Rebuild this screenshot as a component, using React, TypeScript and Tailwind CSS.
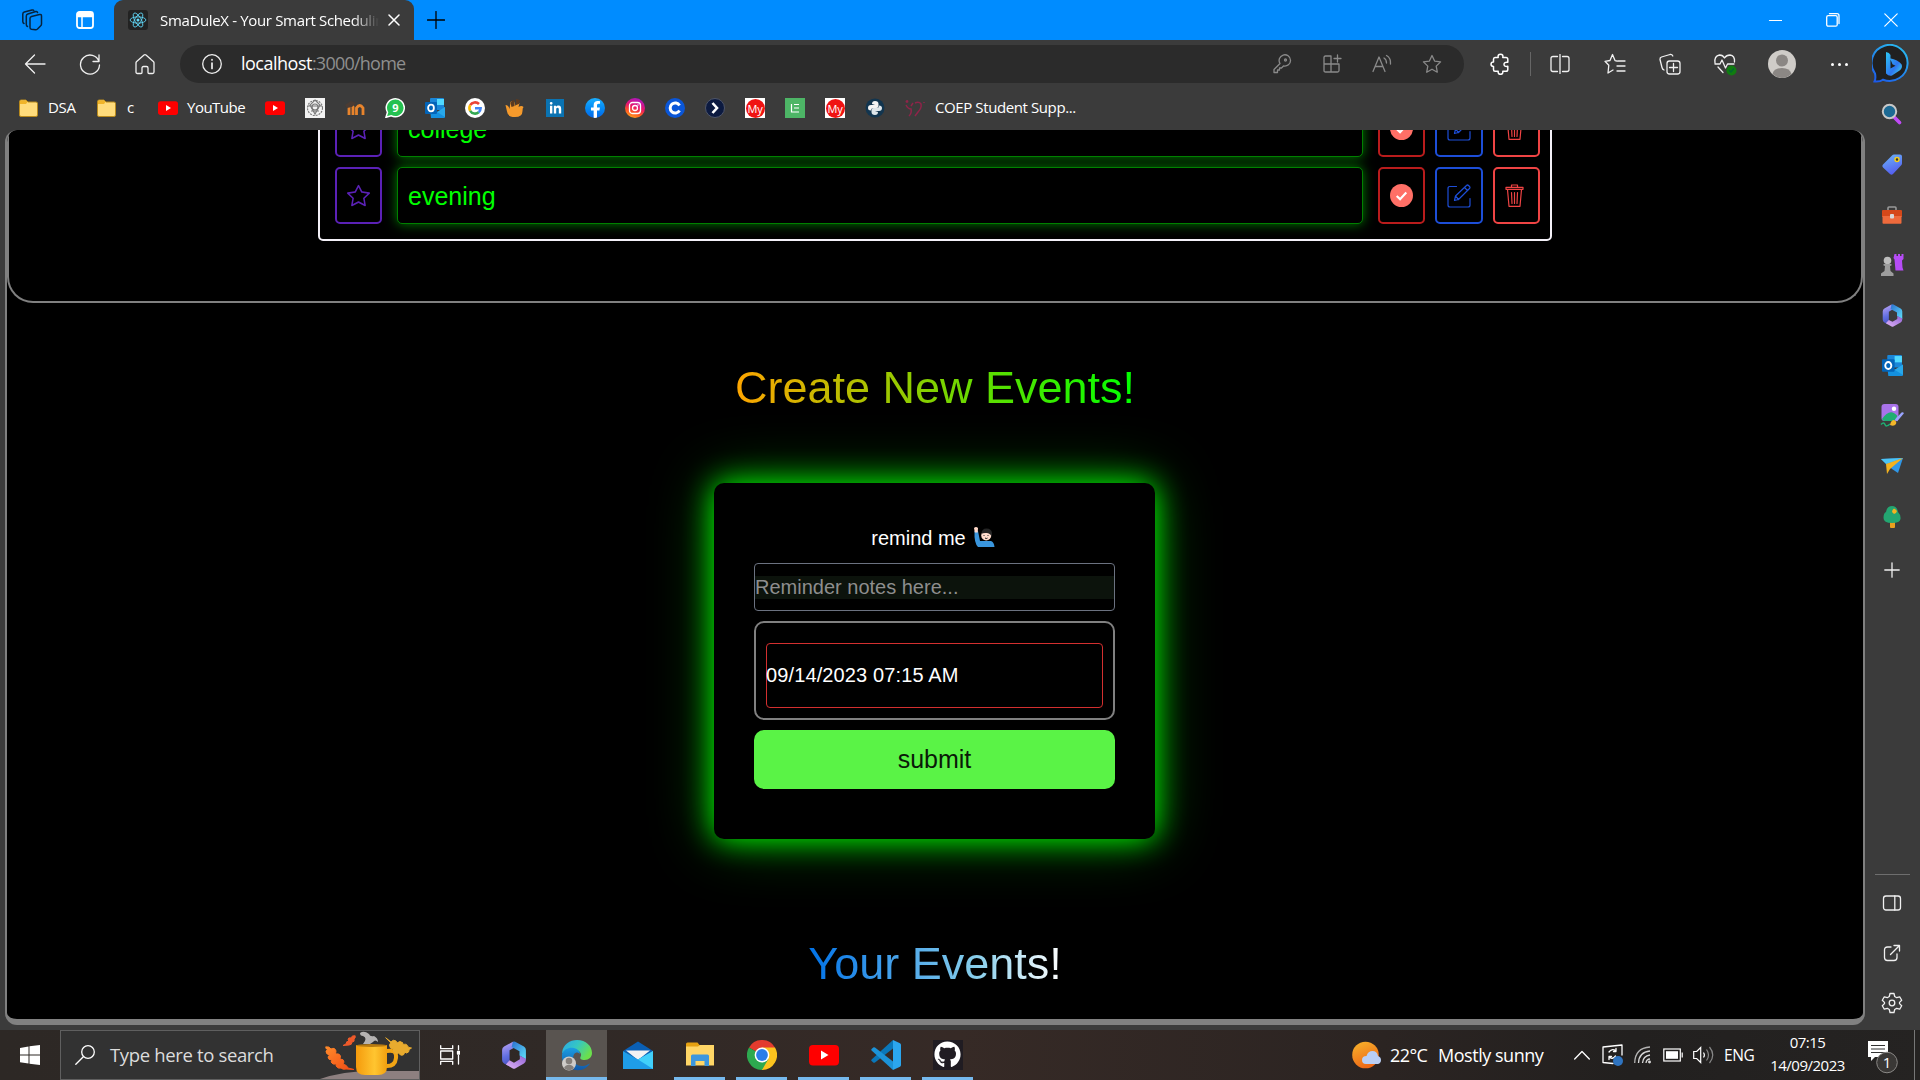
import React from "react";
import { BsStar } from "react-icons/bs";
import { FaLinkedinIn, FaFacebookF, FaGithub } from "react-icons/fa";

type SvgProps = { s?: number; h?: number; c?: string; vb?: string; children?: React.ReactNode };

const Svg = ({ s = 20, h, c = "", vb = "0 0 20 20", children }: SvgProps) => (
  <svg width={s} height={h ?? s} viewBox={vb} fill="none" stroke="currentColor" strokeWidth="1.3" strokeLinecap="round" strokeLinejoin="round" className={"block shrink-0 " + c}>
    {children}
  </svg>
);

const STAR = "M10 1.5l2.6 5.6 6 .8-4.4 4.2 1.1 6.1L10 15.200l-5.300 3 1.100-6.100L1.400 7.900l6-.8z";

/* ---------- brand icons ---------- */

const M365 = ({ s = 24, id }: { s?: number; id: string }) => (
  <svg width={s} height={s} viewBox="0 0 24 24" className="block shrink-0">
    <defs>
      <linearGradient id={id + "a"} x1=".3" y1="0" x2=".5" y2="1"><stop offset="0" stopColor="#b9a2f5" /><stop offset=".6" stopColor="#5f6ee0" /><stop offset="1" stopColor="#4a50c0" /></linearGradient>
      <linearGradient id={id + "b"} x1="0" y1="0" x2="1" y2="1"><stop offset="0" stopColor="#2b6fcf" /><stop offset="1" stopColor="#5fe0fa" /></linearGradient>
      <linearGradient id={id + "c"} x1="0" y1="1" x2="1" y2="0"><stop offset="0" stopColor="#e0b4f6" /><stop offset="1" stopColor="#9162d6" /></linearGradient>
    </defs>
    <path d="M11 .6L3.500 4.800Q1.800 5.800 1.800 7.800v8.400q0 2 1.700 3L7 21.200l4-2.300-2.800-1.700V8l4.300-2.500z" fill={`url(#${id}a)`} />
    <path d="M11 .6q1-.5 2 0l7.500 4.200q1.700 1 1.700 3v7.900l-5.500-3.200V8.800L10 5.200z" fill={`url(#${id}b)`} />
    <path d="M5 20.200l6 3.300q1 .5 2 0l7.500-4.300q1.700-1 1.700-3v-1L17 12.600v3l-5 3-3.800-2z" fill={`url(#${id}c)`} />
  </svg>
);

const Outlook = ({ s = 20 }: { s?: number }) => (
  <svg width={s} height={s} viewBox="0 0 20 20" className="block shrink-0">
    <rect x="5" y="0" width="14" height="12" rx="1" fill="#1a86d8" />
    <rect x="12" y="1" width="7" height="6" fill="#50d9ff" />
    <path d="M5 10l8 4 7-5v10q0 1-1 1H6z" fill="#1490df" />
    <path d="M20 9v10l-8-5z" fill="#28a8ea" />
    <rect x="0" y="4" width="12" height="12" rx="1" fill="#0364b8" />
    <ellipse cx="6" cy="10" rx="2.900" ry="3.300" fill="none" stroke="#fff" strokeWidth="1.800" />
  </svg>
);

const YouTube = ({ s = 20 }: { s?: number }) => (
  <svg width={s} height={s} viewBox="0 0 30 30" className="block shrink-0">
    <rect x="0" y="5" width="30" height="20.500" rx="4" fill="#f00" />
    <path d="M12 10.500l7.500 4.500-7.500 4.500z" fill="#fff" />
  </svg>
);

const Folder = () => (
  <svg width="20" height="20" viewBox="0 0 20 20" className="block shrink-0">
    <path d="M1.500 4q0-2 1.500-2h5l2 2h8q1.500 0 1.500 1.500v11.500q0 1.500-1.500 1.500H3q-1.500 0-1.500-1.500z" fill="#ffdc7c" stroke="#b98a1c" strokeWidth="1" />
    <path d="M2 3.500q0-1 1-1h5l1.500 1.500L8 6H2z" fill="#f0b429" />
  </svg>
);

const Google = () => (
  <svg width="20" height="20" viewBox="0 0 20 20" className="block shrink-0" fill="none" strokeWidth="2.600">
    <circle cx="10" cy="10" r="10" fill="#fff" />
    <path d="M14 6A5.600 5.600 0 0 0 5.200 7.200" stroke="#ea4335" />
    <path d="M5.200 7.200a5.600 5.600 0 0 0 0 5.600" stroke="#fbbc05" />
    <path d="M5.200 12.800A5.600 5.600 0 0 0 13.700 14.200" stroke="#34a853" />
    <path d="M13.700 14.200A5.600 5.600 0 0 0 15.600 10.200H10" stroke="#4285f4" />
  </svg>
);

const Chrome = () => (
  <svg width="30" height="30" viewBox="0 0 30 30" className="block shrink-0">
    <path d="M15 15L2 7.500A15 15 0 0 1 28 7.500z" fill="#e33b2e" />
    <path d="M15 15V7.500h13A15 15 0 0 1 15 30z" fill="#fcc31e" />
    <path d="M15 15l6.500 3.700L15 30A15 15 0 0 1 2 7.500z" fill="#2da94f" />
    <circle cx="15" cy="15" r="7.400" fill="#fff" />
    <circle cx="15" cy="15" r="5.900" fill="#2b7de9" />
  </svg>
);

const EdgeIcon = () => (
  <svg width="32" height="32" viewBox="0 0 32 32" className="block shrink-0">
    <defs>
      <linearGradient id="eg" x1="0" y1="0" x2="1" y2=".5"><stop offset="0" stopColor="#2aa6e8" /><stop offset=".5" stopColor="#35c6c4" /><stop offset="1" stopColor="#6be04c" /></linearGradient>
      <linearGradient id="eb" x1="0" y1="0" x2="0" y2="1"><stop offset="0" stopColor="#1b9de2" /><stop offset="1" stopColor="#1258a8" /></linearGradient>
    </defs>
    <path d="M1 14C2 5 9 1 16 1c9 0 15 6 15 13 0 4-3 7-7.500 7-3 0-5-1-4-3 2-3-1-7-5-7-6 0-11 3-13.500 3z" fill="url(#eg)" />
    <path d="M1 15c2-5 7-7 12-6 4 .8 6 4 6 6-1-1-2-1.500-3.500-1.500C12 14 11 20 14 24c3 4 9 4 15 .5-3 5-9 7.500-14 6.500C5 30 0 23 1 15z" fill="url(#eb)" />
    <circle cx="8" cy="24.500" r="7" fill="#cfccc9" />
    <circle cx="8" cy="22" r="3.300" fill="#85807c" />
    <path d="M3 29.300q1-3.500 5-3.500t5 3.500Q8 33.500 3 29.300z" fill="#85807c" />
  </svg>
);

const Mail = () => (
  <svg width="30" height="30" viewBox="0 0 30 30" className="block shrink-0">
    <path d="M0 11L15 1.500 30 11l-15 9z" fill="#0a5fb4" />
    <path d="M3 10.500h24L15 20z" fill="#f3f3f3" />
    <path d="M0 11l15 8.500L30 11v18H0z" fill="#1f9de8" />
    <path d="M15 19.500L30 11v18z" fill="#41d0fa" />
  </svg>
);

const Explorer = () => (
  <svg width="28" height="26" viewBox="0 0 28 26" className="block shrink-0">
    <path d="M0 2q0-1.500 1.500-1.500h10L13.500 3H28v8H0z" fill="#e5a111" />
    <path d="M0 4.500h12l2-1.500h14v20.500H0z" fill="#ffd666" />
    <path d="M5 24V14q0-1.500 1.500-1.500h15Q23 12.500 23 14v10h-4.500v-5h-9v5z" fill="#3d97dd" />
  </svg>
);

const VSCode = () => (
  <svg width="30" height="30" viewBox="0 0 30 30" className="block shrink-0">
    <path d="M22 0v8.500L4 22.500q-1 .6-1.800 0L.6 21q-.8-.8 0-1.600z" fill="#0a77b9" />
    <path d="M22 30v-8.500L4 7.500q-1-.6-1.800 0L.6 9q-.8.8 0 1.600z" fill="#1c93d8" />
    <path d="M22 0l7 3.200q1 .5 1 1.800v20q0 1.200-1 1.800L22 30z" fill="#2ba6ee" />
  </svg>
);

const ReactLogo = () => (
  <div className="flex size-5 shrink-0 items-center justify-center rounded-[3px] bg-[#222]">
    <svg width="18" height="18" viewBox="-12 -12 24 24" fill="none" stroke="#61dafb" strokeWidth="1.100">
      <ellipse rx="10.500" ry="4.200" /><ellipse rx="10.500" ry="4.200" transform="rotate(60)" /><ellipse rx="10.500" ry="4.200" transform="rotate(120)" />
      <circle r="2" fill="#61dafb" stroke="none" />
    </svg>
  </div>
);

/* ---------- browser chrome ---------- */

const TitleBar = () => (
  <div className="flex h-10 shrink-0 bg-[#008cff] text-black">
    <div className="flex w-[114px] items-center pl-[21px]">
      <Svg s={22} vb="0 0 22 22" c="text-[#06233d]">
        <path d="M9 9.500q0-1.500 1.500-2l8-2q2-.5 2 1.500v8q0 1.200-1 2l-3 3q-1 .8-2 .7l-4-.4Q9 20 9 18.500z" strokeWidth="1.500" />
        <path d="M6.500 17.500Q5.300 17 5.300 15.500V7q0-1.500 1.500-2l8-2.500q1.500-.3 1.800 1" strokeWidth="1.500" />
        <path d="M3 14.500Q1.800 14 1.800 12.500V5q0-1.500 1.500-2L11 1q1.500-.3 1.800.5" strokeWidth="1.500" />
      </Svg>
      <Svg s={18} c="ml-[33px] text-white" vb="0 0 18 18">
        <rect x="1" y="1" width="16" height="16" rx="2.500" strokeWidth="1.800" /><path d="M1.500 2.500h15v3h-15z" fill="currentColor" /><path d="M6 5v11.500" strokeWidth="1.500" />
      </Svg>
    </div>
    <div className="flex w-[300px] items-center rounded-t-[9px] bg-[#3b3b3b] pl-[14px] text-white">
      <ReactLogo />
      <div className="ml-3 w-[219px] overflow-hidden whitespace-nowrap text-[15px] leading-5 tracking-[-0.34px] [mask-image:linear-gradient(to_right,black_88%,transparent)]">SmaDuleX - Your Smart Scheduling</div>
      <Svg s={12} vb="0 0 12 12" c="ml-[9px]"><path d="M1 1l10 10M11 1L1 11" strokeWidth="1.500" /></Svg>
    </div>
    <Svg s={18} vb="0 0 18 18" c="ml-[13px] mt-[11px]"><path d="M9 .5v17M.5 9h17" /></Svg>
    <div className="ml-auto flex items-center pr-[22px] text-white">
      <Svg s={14} vb="0 0 14 14"><path d="M1.500 7.500h12" strokeWidth="1.200" /></Svg>
      <Svg s={14} vb="0 0 14 14" c="ml-[44px]"><rect x=".7" y="2.700" width="10.500" height="10.500" rx="1.500" /><path d="M3.500.7h7.500q2 0 2 2V10.500" /></Svg>
      <Svg s={14} vb="0 0 14 14" c="ml-[44px]"><path d="M.8.8l12.400 12.400M13.200.8L.8 13.200" strokeWidth="1.200" /></Svg>
    </div>
  </div>
);

const Toolbar = () => (
  <div className="flex h-12 shrink-0 items-center pl-[24px] text-[#f0f0f0]">
    <Svg s={22} vb="0 0 22 22" c="-mt-px"><path d="M21 11H1.500M10.500 2L1.500 11l9 9" /></Svg>
    <Svg s={22} vb="0 0 22 22" c="ml-[33px] -mt-px"><path d="M20 8.500A9.500 9.500 0 1 0 20.500 12M20 2v6.500h-6" /></Svg>
    <Svg s={22} vb="0 0 22 22" c="ml-[33px] -mt-px"><path d="M2 9.800Q2 9 2.700 8.400L10 2q1-.8 2 0l7.300 6.400q.7.600.7 1.400V19q0 1.500-1.500 1.500H15q-1 0-1-1V15q0-1.500-1.500-1.500h-3Q8 13.500 8 15v4.500q0 1-1 1H3.500Q2 20.500 2 19z" /></Svg>
    <div className="ml-[24px] flex h-[38px] w-[1284px] items-center rounded-full bg-[#2b2b2b] pl-[22px] pr-[22px]">
      <Svg s={20} c="text-[#eee]"><circle cx="10" cy="10" r="9.300" /><path d="M10 9v5.500M10 5.700v.3" strokeWidth="1.700" /></Svg>
      <div className="ml-[19px] -mt-[2px] text-[18px] leading-6 tracking-[-0.76px] text-[#8f8f8f]"><span className="tracking-[-0.5px] text-white">localhost</span>:3000/home</div>
      <div className="ml-auto flex items-center gap-[30px] text-[#8a8a8a]">
        <Svg><circle cx="13.500" cy="6" r="1" /><path d="M8 9.500A5.700 5.700 0 1 1 11.500 12L9.500 14H7.500v2H5.500v2.500H2V15.500z" /></Svg>
        <Svg><path d="M2 3.500Q2 2 3.500 2H9v16H3.500Q2 18 2 16.500zM2 10h15M17 10v6.500q0 1.500-1.500 1.500H9M15.500 1v7M12 4.500h7" /></Svg>
        <Svg><path d="M1 17.500L7 3l6 14.500M3.200 12.500h7.600M12 4q2.500 1.500 2.500 5M14.500 1.500Q19 4 18.500 10" /></Svg>
        <Svg><path d={STAR} /></Svg>
      </div>
    </div>
    <Svg s={22} vb="0 0 22 22" c="ml-[26px] text-white"><path d="M5 4.500h3.200q-.6-3.300 2.300-3.300t2.300 3.300H16q1.800 0 1.800 1.800v3q-3.800-.5-3.800 2t3.800 2v3.200q0 1.800-1.800 1.800h-3.200q.4 3-2.300 3t-2.300-3H5q-1.500 0-1.500-1.800v-3Q1 13.500 1 11.300t2.500-2.200V6.300Q3.500 4.500 5 4.500z" strokeWidth="1.500" /></Svg>
    <div className="ml-[18px] h-6 w-px bg-[#666]" />
    <Svg s={20} c="ml-[19px]"><path d="M10 .5v19M7.500 2.500H3Q1 2.500 1 4.500v11q0 2 2 2h4.500M12.500 2.500H17q2 0 2 2v11q0 2-2 2h-4.500" /></Svg>
    <Svg s={22} vb="0 0 22 22" c="ml-[34px]"><path d="M13 8l-2-.4L8.500 1.500 6 7.500l-5 .8 3.800 4L4 20l5-3M14 8h7M13 13h8M13 18h8" /></Svg>
    <Svg s={22} vb="0 0 22 22" c="ml-[33px]"><rect x="8" y="8" width="13" height="13" rx="2.500" /><path d="M14.500 10.500v8M10.500 14.500h8M5 17Q3.500 16.500 3 14.500L1 6.500Q.8 4.500 2.500 4L11 1.500q2-.3 2.800 1.500" /></Svg>
    <Svg s={24} vb="0 0 24 24" c="ml-[32px]"><path d="M2 11Q1 4 6.500 3q3.500 0 5 3 2-3 5.500-3 5 .5 4.500 7M2 12h5l2-4 3.500 8 2-4H21M5 15l5 5.500" /><circle cx="18.500" cy="18.500" r="5" fill="#107c10" stroke="none" /><path d="M16.500 18.500l1.500 1.500 2.500-3" stroke="#063" /></Svg>
    <div className="ml-[31px]">
      <svg width="28" height="28" viewBox="0 0 28 28"><circle cx="14" cy="14" r="14" fill="#cfccc8" /><circle cx="14" cy="10.500" r="6" fill="#8b8784" /><path d="M4.500 24q1.500-6 9.500-6t9.500 6Q14 32 4.500 24z" fill="#8b8784" /></svg>
    </div>
    <div className="ml-[35px] flex gap-[4px]"><i className="size-[3px] rounded-full bg-white" /><i className="size-[3px] rounded-full bg-white" /><i className="size-[3px] rounded-full bg-white" /></div>
    <svg width="40" height="40" viewBox="0 0 40 40" className="ml-[24px] block shrink-0">
      <defs>
        <linearGradient id="bo" x1="0" y1="1" x2=".6" y2="0"><stop offset="0" stopColor="#1c55e8" /><stop offset="1" stopColor="#28b2ee" /></linearGradient>
        <linearGradient id="bb" x1="0" y1="0" x2="1" y2="1"><stop offset="0" stopColor="#2dc7f3" /><stop offset=".6" stopColor="#2e76f0" /><stop offset="1" stopColor="#42e0e8" /></linearGradient>
      </defs>
      <path d="M2.500 37.500q1.500-3 .5-8A18 18 0 1 1 11 35.700q-3 2.300-8.500 1.800z" fill="#202020" stroke="url(#bo)" strokeWidth="2" />
      <path d="M14 8q3.500.5 4.500 3v13.500l5-2.700-3-1.500-2.500-6q8 1.500 11.500 6 1.500 3-1.500 6L20 31.500q-3 1-6-2z" fill="url(#bb)" />
    </svg>
  </div>
);

const MyBadge = () => (
  <div className="flex size-5 shrink-0 items-center justify-center bg-white"><div className="flex size-[19px] items-center justify-center rounded-full bg-[#f01212] text-[11px] leading-none tracking-tight text-white">My</div></div>
);

const Bookmarks = () => (
  <div className="flex h-10 items-center pl-[18px] text-[15px] tracking-[-0.35px] text-white">
    <Folder /><span className="-mt-[2px] ml-[10px] w-[48px]">DSA</span>
    <Folder /><span className="-mt-[2px] ml-[11px] w-[31px]">c</span>
    <YouTube /><span className="-mt-[2px] ml-[9px] w-[78px] tracking-[-0.5px]">YouTube</span>
    <div className="flex items-center gap-5">
      <YouTube />
      <svg width="20" height="20" viewBox="0 0 20 20"><path d="M0 0h20v20H0z" fill="#f2f2f2" /><g fill="none" stroke="#777" strokeWidth="1.100"><circle cx="10" cy="10" r="7.500" strokeDasharray="2 1" /><path d="M10 2l5 5-5 9-5-9zM3 8h14M6 13h8" /><circle cx="10" cy="9" r="3" /></g></svg>
      <svg width="20" height="20" viewBox="0 0 20 20"><path d="M4 17V9q2-3 4 0v8M11.500 17v-7q3.300-5 6.500 0v7" fill="none" stroke="#e8842c" strokeWidth="2.800" /><path d="M0 7l6-4 5 2-4 4-5 1z" fill="#4a3b33" /></svg>
      <svg width="20" height="20" viewBox="0 0 20 20"><path d="M1 19.300l1.500-5A9 9 0 1 1 6 17.700z" fill="#25c151" stroke="#fff" strokeWidth="1.500" /><text x="10.300" y="14" textAnchor="middle" fontSize="11" fontWeight="700" fill="#fff">9</text></svg>
      <Outlook />
      <Google />
      <svg width="20" height="20" viewBox="0 0 20 20"><path d="M.5 7q3 0 4 4l1-7q2-2 4 0l1 4q1-3 4-3l-1 4q3-2 5 0-1 1-1 4 0 6-7.500 6T2 13.500z" fill="#f59a2c" /><path d="M5.500 5q1-3 4-3v6l-3 1zM11 1l4 1-1 4-3 1z" fill="#5d3a1f" /></svg>
      <div className="mx-px flex size-[18px] items-center justify-center bg-[#0a73b2] text-white"><FaLinkedinIn size={13} /></div>
      <div className="flex size-5 items-end justify-center overflow-hidden rounded-full bg-gradient-to-b from-[#1aafff] to-[#0866e8] text-white"><FaFacebookF size={17} /></div>
      <div className="flex size-5 items-center justify-center rounded-full bg-[linear-gradient(20deg,#ffc020,#ff5a1f_30%,#e8156e_55%,#9b18d8)] text-white"><Svg s={14} vb="0 0 14 14"><rect x="1.500" y="1.500" width="11" height="11" rx="3" /><circle cx="7" cy="7" r="2.500" /><path d="M10 4v0" /></Svg></div>
      <div className="flex size-5 items-center justify-center rounded-full bg-[#0a56d8] text-white"><svg width="14" height="14" viewBox="0 0 14 14" fill="none" stroke="currentColor" strokeWidth="3"><path d="M11.500 4.500A5 5 0 1 0 11.500 9.500" /></svg></div>
      <div className="flex size-5 items-center justify-center rounded-full border border-[#4d5468] bg-[#0c1a40] text-white"><svg width="10" height="12" viewBox="0 0 10 12" fill="none" stroke="currentColor" strokeWidth="2.600"><path d="M2.500 1L7 6l-4.500 5" /></svg></div>
      <MyBadge />
      <div className="flex size-5 items-center justify-center bg-[#4db566]"><svg width="10" height="10" viewBox="0 0 10 10" fill="none" stroke="#fff" strokeWidth="1.200"><path d="M1.500 1v8H9M4 1.500h5M4 5h5" /></svg></div>
      <MyBadge />
      <svg width="20" height="20" viewBox="0 0 20 20"><circle cx="10" cy="10" r="9.500" fill="#12354f" /><path d="M7 6q0-3 3-3 3.500 0 3.500 3v2q0 2-2 2H8.500Q6 10 6 12.500 3 12.500 3 10q0-3 3-3h4" fill="#f4f4f4" /><path d="M13 14q0 3-3 3-3.500 0-3.500-3v-2q0-2 2-2h3Q14 10 14 7.500q3 0 3 2.500 0 3-3 3h-4" fill="#dfe6ea" /></svg>
      <svg width="20" height="20" viewBox="0 0 20 20" fill="none" stroke="#8e2449" strokeWidth="1.500"><path d="M1 7q2 4 5 4 1 4-2 7M10 5q4-2 6 1 1 4-3 8l-3 4M6 8l2-3M19 4v1" /><circle cx="2" cy="3.500" r=".7" /></svg>
    </div>
    <span className="-mt-[2px] ml-[10px] tracking-[-0.4px]">COEP Student Supp...</span>
  </div>
);

const Sidebar = () => (
  <div className="flex w-[54px] shrink-0 flex-col items-center pt-[1px] text-[#f0f0f0]">
    <div className="flex h-[50px] items-center"><svg width="22" height="22" viewBox="0 0 22 22"><path d="M13.500 14.500l5 5" stroke="#c04af5" strokeWidth="3.600" strokeLinecap="round" /><circle cx="8.500" cy="8.500" r="6.700" fill="#1d6a94" stroke="#c8c8c8" strokeWidth="2" /></svg></div>
    <div className="flex h-[51px] items-center"><svg width="22" height="22" viewBox="0 0 22 22"><defs><linearGradient id="tg" x1="0" y1="0" x2=".4" y2="1"><stop stopColor="#6cb8f8" /><stop offset="1" stopColor="#5560f0" /></linearGradient></defs><path d="M11 1.500q1-1 2-1h6q2 0 2 2v7q0 1-1 2l-8 8.500q-1.500 1.500-3 0l-7-6.500q-1.500-1.500 0-3z" fill="url(#tg)" /><circle cx="16" cy="5.500" r="2" fill="#333" stroke="#f3cd1c" strokeWidth="1.500" /></svg></div>
    <div className="flex h-[50px] items-center"><svg width="22" height="20" viewBox="0 0 22 20"><path d="M7 6V3q0-1 1-1h6q1 0 1 1v3" fill="none" stroke="#999" strokeWidth="1.600" /><path d="M1 6q0-1 1-1h18q1 0 1 1v6H1z" fill="#d5481a" /><path d="M1.500 11h19v7q0 .8-1 .8h-17q-1 0-1-.8z" fill="#ee6a3c" /><rect x="9" y="9" width="4" height="4.500" rx="1" fill="#d8d8d8" /></svg></div>
    <div className="flex h-[50px] items-center"><svg width="24" height="24" viewBox="0 0 24 24"><path d="M14.500 1h2v2h1.500V1h2v2h1.500V1h2v5l-1.500 1.500.5 7 1 3h-8l-1-11-1-1.500z" fill="#b64cf6" /><circle cx="7.500" cy="7.500" r="3.800" fill="#bdbdbd" /><path d="M3.500 11h8v1.500l-1.500.5.500 5 3 2.500V23H1v-2.500L4.500 18l.5-5-1.500-.5z" fill="#9d9d9d" /></svg></div>
    <div className="flex h-[50px] items-center"><M365 s={23} id="ms" /></div>
    <div className="flex h-[50px] items-center"><Outlook s={21} /></div>
    <div className="flex h-[50px] items-center"><svg width="24" height="24" viewBox="0 0 24 24"><rect x="1.500" y="1" width="17" height="17" rx="3" fill="#a973ea" /><circle cx="14" cy="5.800" r="2.200" fill="#fff" /><path d="M2 16q8-12 15.500-3l-3 5H5q-2.500 0-3-2z" fill="#1fae72" /><path d="M1 21.500q3-3 4 0t5-.5" fill="none" stroke="#1fae72" strokeWidth="1.500" /><path d="M15 16.500l6.500-7q2-1 2.300 1l-6.800 8z" fill="#9aa4ff" /><path d="M10 22q1-5 4-5 3 1 2 4-2 3-6 1z" fill="#f3b62a" /></svg></div>
    <div className="flex h-[51px] items-center"><svg width="22" height="18" viewBox="0 0 22 18"><path d="M0 2L22 1l-5 15-6-4z" fill="#2f97e8" /><path d="M0 2l22-1L5 7z" fill="#4cc4f5" /><path d="M5 7L22 1 9 12l-3 5z" fill="#f3b21e" /></svg></div>
    <div className="flex h-[51px] items-center"><svg width="20" height="24" viewBox="0 0 20 24"><rect x="8" y="15" width="5" height="8" rx="1" fill="#e9a01e" /><path d="M10 1q5 0 6 6 3 3 2.500 7T10 18Q1.500 18 1.500 13T4 7q1-6 6-6z" fill="#23a671" /><path d="M12 3.500l1.500 1 1.500 1.500-1 2-2 1-2-2 .5-2z" fill="#f6b321" /></svg></div>
    <div className="flex h-[55px] items-center"><Svg s={16} vb="0 0 16 16"><path d="M8 .8v14.400M.8 8h14.400" /></Svg></div>
    <div className="mt-auto h-px w-[35px] shrink-0 bg-[#6e6e6e]" />
    <div className="flex h-[56px] shrink-0 items-center"><Svg s={20}><rect x="1.500" y="3" width="17" height="14" rx="2.500" /><path d="M12.800 3v14" /></Svg></div>
    <div className="flex h-[44px] shrink-0 items-center"><Svg s={18} vb="0 0 18 18"><path d="M8 3H4.500Q1.500 3 1.500 6v7.500q0 3 3 3H11q3 0 3-3V10M11 1.500h5.500V7M16.500 1.500L7.500 10.500" /></Svg></div>
    <div className="-mb-[6px] flex h-[56px] shrink-0 items-center"><Svg s={22} vb="0 0 22 22"><circle cx="11" cy="11" r="2.800" /><path d="M9 1.500h4l.7 3 2 1.200 3-.9 2 3.500-2.200 2.100v1.200l2.200 2.100-2 3.500-3-.9-2 1.200-.7 3H9l-.7-3-2-1.200-3 .9-2-3.500 2.200-2.100v-1.200L1.300 8.300l2-3.500 3 .9 2-1.200z" /></Svg></div>
  </div>
);

/* ---------- web page ---------- */

const TodoRow = ({ text }: { text: string }) => (
  <div className="flex h-[57px]">
    <div className="flex w-[47px] items-center justify-center rounded-[5px] border-2 border-[#5b21b6] text-[#5b21b6]"><BsStar size={23} /></div>
    <div className="ml-[15px] w-[966px] rounded-[5px] border border-[#008000] bg-black pl-[10px] pt-px text-[25px] leading-[55px] text-[#00ff00] shadow-[0_0_12px_#008000]">{text}</div>
    <div className="ml-[15px] flex w-[47px] items-center justify-center rounded-[5px] border-2 border-[#b91c1c]">
      <svg width="23" height="23" viewBox="0 0 24 24"><circle cx="12" cy="12" r="12" fill="#ff6f66" /><path d="M7 12.500l3.500 3.300 6.500-7" fill="none" stroke="#fff" strokeWidth="2.200" /></svg>
    </div>
    <div className="ml-[10px] flex w-[48px] items-center justify-center rounded-[5px] border-2 border-[#1d4ed8] text-[#1d4ed8]">
      <Svg s={24} vb="0 0 24 24"><path d="M9.500 2.500H3q-2 0-2 2V21q0 2 2 2h18q2 0 2-2v-6.500M7.500 16.500l1-4.500L19.500 1.500q1-1 2 0l1 1q1 1 0 2L11.500 15.500zM17.500 3.500l3 3M8.500 12l3 3.500" strokeWidth="1.200" /></Svg>
    </div>
    <div className="ml-[10px] flex w-[47px] items-center justify-center rounded-[5px] border-2 border-[#ef4444] pr-1 text-[#ef4444]">
      <Svg s={19} h={23} vb="0 0 19 23"><path d="M1 3.300h17v2H1zM6.500 3V1h6v2M2.500 5.500L4 22.300h11L16.500 5.500M6.500 8.500l.5 11M9.500 8.500v11M12.500 8.500l-.5 11" strokeWidth="1.200" /></Svg>
    </div>
  </div>
);

const Page = () => (
  <div className="ml-[5px] flex h-[895px] w-[1860px] shrink-0 flex-col items-center overflow-hidden rounded-[12px] border-x-2 border-b-[6px] border-[#808080] bg-black font-['Liberation_Sans',Arial,sans-serif] tracking-normal">
    <div className="flex h-[173px] w-[1856px] shrink-0 flex-col items-center justify-end rounded-b-[26px] border-x-2 border-b-2 border-[#808080] pb-[60px]">
      <div className="flex h-[500px] w-[1234px] shrink-0 flex-col justify-end gap-[10px] rounded-[5px] border-2 border-[#f3f0f7] pb-[15px] pl-[15px]">
        <TodoRow text="college" />
        <TodoRow text="evening" />
      </div>
    </div>
    <h1 className="mt-[59px] h-[52px] shrink-0 bg-[linear-gradient(to_right,#ffa500,#00ff00)] bg-clip-text text-[45px] leading-[52px] text-transparent">Create New Events!</h1>
    <form className="mr-[1px] mt-[69px] flex h-[356px] w-[441px] shrink-0 flex-col rounded-[10px] bg-black px-10 text-[20px] shadow-[0_0_31px_#00ff00,0_0_62px_#006000]">
      <div className="mt-[41px] flex h-[28px] items-center justify-center gap-[8px] pr-[3px] text-white">
        <span>remind me</span>
        <svg width="21" height="21" viewBox="0 0 21 21" className="-mt-[1px]"><path d="M.5 4h3.500l2 10q6 0 11 0 3 1 3.500 6H4Q0 16 .5 4z" fill="#3a96dd" /><path d="M.8 5.500L0 1q2-2 4 0l-.3 4.500z" fill="#ffd8c8" /><circle cx="12.200" cy="8.500" r="5" fill="#ffdccc" /><path d="M7.500 7q0-5.500 5-5.500T18 6v4.500q-1-4-5-4.500Q9 5.500 7.500 7z" fill="#252525" /><path d="M9.500 8.500h1M13.500 8.500h1M11 11q1.500 1 2.500 0" stroke="#333" /></svg>
      </div>
      <div className="mt-[11px] flex h-[48px] shrink-0 items-center rounded-[4px] border border-[#6b7280]"><div className="h-[23px] w-full bg-[#0c130c] leading-[23px] text-[#8e8e8e]">Reminder notes here...</div></div>
      <div className="mt-[10px] h-[99px] shrink-0 rounded-[10px] border-2 border-[#808080] px-[10px] pt-[20px]">
        <div className="h-[65px] w-[337px] rounded-[4px] border border-[#d32f2f]"><span className="-ml-px block text-[20px] leading-[63px] tracking-[0.12px] text-white">09/14/2023 07:15 AM</span></div>
      </div>
      <button type="button" className="mt-[10px] h-[59px] shrink-0 rounded-[10px] bg-[#5af346] pt-px text-[25px] text-[#0a1a08]">submit</button>
    </form>
    <h1 className="mt-[99px] h-[52px] shrink-0 bg-[linear-gradient(to_right,#0072e8,#87ceeb_66%,#fff)] bg-clip-text text-[45px] leading-[52px] text-transparent">Your Events!</h1>
  </div>
);

/* ---------- taskbar ---------- */

const TaskButton = ({ active, open = true, children }: { active?: boolean; open?: boolean; children: React.ReactNode }) => (
  <div className={"flex h-[50px] w-[61px] shrink-0 flex-col items-center " + (active ? "bg-[#595450]" : "")}>
    <div className="flex h-[47px] items-center pt-[2px]">{children}</div>
    {open && <div className={active ? "h-[3px] w-full bg-[#76b9ed]" : "h-[3px] w-[51px] bg-[#76b9ed]"} />}
  </div>
);

const SearchArt = () => (
  <svg width="99" height="48" viewBox="0 0 99 48" className="ml-auto block shrink-0" strokeLinejoin="round" strokeLinecap="round">
    <defs>
      <linearGradient id="cup" x1="0" x2="1"><stop offset="0" stopColor="#f59a0c" /><stop offset=".6" stopColor="#ffc530" /><stop offset="1" stopColor="#f2a010" /></linearGradient>
      <linearGradient id="leaf" x1="0" y1="0" x2="1" y2="1"><stop offset="0" stopColor="#ff8a2a" /><stop offset="1" stopColor="#f04a14" /></linearGradient>
    </defs>
    <path d="M0 48Q25 39 60 40h41v8z" fill="#8d8080" />
    <path d="M43 13q5-6 0-8-3 0-3-3 4-3 9 1 1 3 5 2 4 2 4 6-3-3-5 0l-3 2z" fill="#b5b3b2" />
    <path d="M67 20q10-2 9 7-1 9-11 8" fill="none" stroke="#f3a514" strokeWidth="4" />
    <path d="M36 14h31v22q0 8-9 8H45q-9 0-9-8z" fill="url(#cup)" />
    <ellipse cx="51.500" cy="14.500" rx="15.500" ry="1.500" fill="#b77a10" />
    <path d="M6 16q3-1 5 2 4-2 5 2l-.5 3q4-1 5 2l-.5 3q4 0 4 3l-1 2q4 1 5 4l6 1.500-8-.5q-3 1-5-1-3 1-5-2 0-1 1-2-5 1-6-2l1-2q-4 0-4-3l1.500-2q-4-1-3.500-4l2-1.500Q5 18 6 16z" fill="url(#leaf)" stroke="url(#leaf)" />
    <path d="M35 5q-3-1-4 2-3-1-3 2l1 1q-3 0-3 3l-3 1.500 6-.5q3 0 3-3 3 0 2-3 2-1 1-3z" fill="#ee5a2a" stroke="#ee5a2a" />
    <path d="M66 7l5 4q2-3 5-1l1 2q3-3 6 0l-.5 2q4-2 5 1 1 2 4 2-3 1-3 4-2 2-4 0 0 4-4 3l-2-2q-3 2-5-1v-3q-4 0-4-4l1-2z" fill="#e8ab2e" stroke="#e8ab2e" />
  </svg>
);

const OPEN_APPS = [
  <Explorer key="explorer" />,
  <Chrome key="chrome" />,
  <YouTube key="youtube" s={30} />,
  <VSCode key="vscode" />,
  <div key="github" className="flex size-[30px] items-center justify-center bg-[#201c22]"><FaGithub size={27} /></div>,
];

const Taskbar = () => (
  <div className="flex h-[50px] shrink-0 items-center bg-[linear-gradient(to_right,#2d2825,#302926_30%,#362a26_50%,#2b2422_72%,#22201f_85%,#252322)] text-white">
    <div className="flex w-[60px] justify-center"><svg width="20" height="20" viewBox="0 0 20 20" fill="#fff"><path d="M0 3l8.500-1.500v8H0zM9.500 1.300L20 0v9.500H9.500zM0 10.500h8.500v8L0 17.200zM9.500 10.500H20V20L9.500 18.700z" /></svg></div>
    <div className="flex h-[50px] w-[360px] items-center overflow-hidden border border-[#5f5f5f] bg-[#323232] pl-[14px]">
      <Svg s={20} c="-mt-[1px]"><circle cx="13" cy="7" r="6.300" /><path d="M8.300 11.700L.8 19.200" /></Svg>
      <span className="ml-[15px] whitespace-nowrap text-[18.500px] tracking-[-0.35px] text-[#dcdcdc]">Type here to search</span>
      <SearchArt />
    </div>
    <div className="ml-[20px] w-[20px]"><Svg s={20}><path d="M.7.700v3h12v-3M.7 19.300v-3h12v3M.7 6h12v8H.7zM18.500.7v4M18.500 10.500v8.500" /><path d="M17.500 6.500h2v2.500h-2z" fill="currentColor" /></Svg></div>
    <div className="ml-[40px] mr-[18px] w-[28px]"><M365 s={28} id="mt" /></div>
    <TaskButton active><EdgeIcon /></TaskButton>
    <TaskButton open={false}><Mail /></TaskButton>
    <div className="ml-px flex gap-px">
      {OPEN_APPS.map((icon, i) => <TaskButton key={i}>{icon}</TaskButton>)}
    </div>
    <div className="ml-auto flex items-center text-[18px] leading-6">
      <svg width="29" height="30" viewBox="0 0 29 30" className="block"><defs><linearGradient id="sun" x1="0" y1="0" x2=".4" y2="1"><stop stopColor="#f7b52c" /><stop offset="1" stopColor="#ee6a17" /></linearGradient></defs><circle cx="13.500" cy="15" r="13.300" fill="url(#sun)" /><path d="M14 24q-4 0-4-4t4.500-4q1.500-5 6-5t5.500 5q3 1 3 4t-3 4z" fill="#b9cff5" /></svg>
      <span className="ml-[9px] w-[48px] whitespace-nowrap tracking-[-0.6px]">22°C</span>
      <span className="w-[136px] whitespace-nowrap tracking-[-0.47px]">Mostly sunny</span>
      <Svg s={16} vb="0 0 16 16"><path d="M.7 12L8 4.500l7.300 7.500" /></Svg>
      <Svg s={22} vb="0 0 22 22" c="ml-[12px]"><path d="M11 19.500l-10-1V3L20 1v10M7 8q3-4 7-1V4.500M14 7.500h-2.500M13.500 12q-3 4-6.500 1v2.500M7 12.500h2.500" /><circle cx="16" cy="17" r="5" fill="#2f74c0" stroke="none" /></Svg>
      <svg width="17" height="18" viewBox="0 0 17 18" className="ml-[10px]" fill="none" stroke="#d8d8d8" strokeWidth="1.300"><path d="M.7 17Q1 2 16 1" opacity=".8" /><path d="M4.500 17Q5 6 16 5" /><path d="M8.500 17Q9 10 16 9" /><path d="M12 17q.500-4 4-4" /><circle cx="15.500" cy="16" r=".8" fill="#fff" /></svg>
      <svg width="20" height="14" viewBox="0 0 20 14" className="ml-[12px]" fill="none" stroke="#fff" strokeWidth="1.200"><rect x=".8" y="1" width="16.500" height="12" /><path d="M19.200 4.500v5" /><rect x="3" y="3.200" width="12" height="7.600" fill="#fff" stroke="none" /></svg>
      <svg width="21" height="20" viewBox="0 0 21 20" className="ml-[10px]" fill="none" stroke="#fff" strokeWidth="1.200"><path d="M.7 6.500h3l4-4v15l-4-4h-3z" /><path d="M10.500 7.500q1.800 2.500 0 5" /><path d="M13.500 4.500q4 5.500 0 11M16.500 2q6.500 8 0 16" stroke="#888" /></svg>
      <span className="ml-[10px] w-[36px] text-[15.500px] tracking-[-0.45px]">ENG</span>
      <div className="flex w-[95px] flex-col items-center pb-[2px] text-[15px] leading-[23px] tracking-[-0.5px]"><span>07:15</span><span>14/09/2023</span></div>
      <svg width="34" height="34" viewBox="0 0 34 34" className="ml-[11px] mt-[4px] block" fontFamily="Open Sans"><path d="M2 1h20v16H9l-4 4v-4H2z" fill="#fff" /><path d="M5 5.500h14M5 9h14M5 12.500h14" stroke="#333" strokeWidth="1.200" /><circle cx="21" cy="22.500" r="10.300" fill="#3a3836" stroke="#8a8886" /><text x="21" y="28" fontSize="15" textAnchor="middle" fill="#fff">1</text></svg>
      <div className="ml-[14px] mr-[5px] h-[50px] w-px bg-[#777]" />
    </div>
  </div>
);

export default function App() {
  return (
    <div className="flex h-[1080px] w-[1920px] flex-col overflow-hidden bg-[#3b3b3b] font-['Open_Sans',sans-serif]">
      <TitleBar />
      <Toolbar />
      <div className="flex h-[937px] shrink-0">
        <div className="w-[1865px] shrink-0">
          <div className="h-[42px]"><Bookmarks /></div>
          <Page />
        </div>
        <Sidebar />
      </div>
      <div className="h-[5px] shrink-0" />
      <Taskbar />
    </div>
  );
}
